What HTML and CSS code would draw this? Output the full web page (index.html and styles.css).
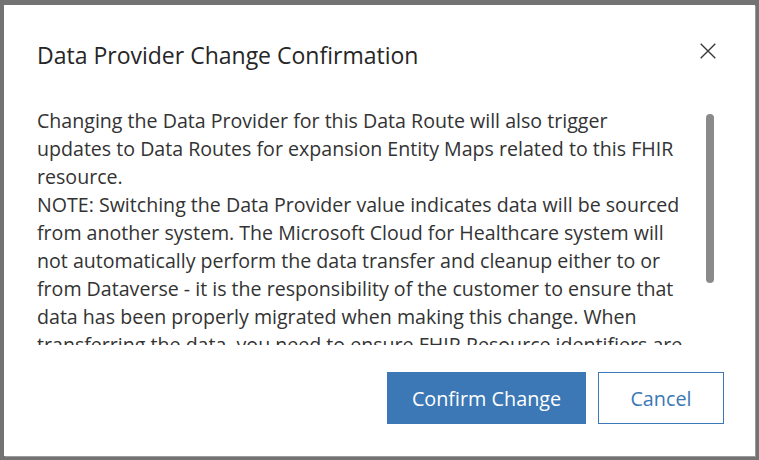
FILE: index.html
```html
<!DOCTYPE html>
<html lang="en">
<head>
  <meta charset="UTF-8">
  <meta name="viewport" content="width=device-width, initial-scale=1.0">
  <title>Data Provider Change Confirmation</title>
  <link rel="stylesheet" href="styles.css">
</head>
<body>
  <div class="dialog" role="dialog" aria-labelledby="dialog-title">
    <div class="dialog-header">
      <h1 id="dialog-title" class="dialog-title">Data Provider Change Confirmation</h1>
      <button class="close-button" aria-label="Close">
        <svg width="16" height="16" viewBox="0 0 16 16">
          <path d="M0.7 0.7 L15.3 15.3 M15.3 0.7 L0.7 15.3" stroke="#3a3a3a" stroke-width="1.4" fill="none"/>
        </svg>
      </button>
    </div>

    <div class="dialog-body-wrap">
      <div class="dialog-body">
        <p>Changing the Data Provider for this Data Route will also trigger<br>
        updates to Data Routes for expansion Entity Maps related to this FHIR<br>
        resource.</p>
        <p>NOTE: Switching the Data Provider value indicates data will be sourced<br>
        from another system. The Microsoft Cloud for Healthcare system will<br>
        not automatically perform the data transfer and cleanup either to or<br>
        from Dataverse - it is the responsibility of the customer to ensure that<br>
        data has been properly migrated when making this change. When<br>
        transferring the data, you need to ensure FHIR Resource identifiers are<br>
        maintained between the systems so that existing references continue to resolve correctly.</p>
      </div>
      <div class="scroll-thumb"></div>
    </div>

    <div class="dialog-footer">
      <button class="btn btn-primary">Confirm Change</button>
      <button class="btn btn-secondary">Cancel</button>
    </div>
  </div>
</body>
</html>
```

FILE: styles.css
```css
body {
  margin: 0;
  padding: 5px 0 0 4px;
  height: 460px;
  box-sizing: border-box;
  background-color: #737373;
  font-family: 'Open Sans', 'Noto Sans', sans-serif;
  color: #333;
  overflow: hidden;
}

.dialog {
  width: 751px;
  height: 451px;
  background-color: #fff;
  box-shadow: 1px 1px 0 #9a9a9a;
  display: flex;
  flex-direction: column;
}

.dialog-header {
  display: flex;
  justify-content: space-between;
  align-items: flex-start;
  padding: 30px 31px 0 33px;
}

.dialog-title {
  margin: 4px 0 0 0;
  font-size: 23px;
  line-height: 32px;
  font-weight: normal;
  color: #262626;
}

.close-button {
  width: 32px;
  height: 32px;
  padding: 0;
  border: none;
  background: none;
  display: flex;
  align-items: center;
  justify-content: center;
  cursor: pointer;
}

.dialog-body-wrap {
  position: relative;
  margin: 36px 0 0 33px;
  width: 679px;
  height: 238px;
}

.dialog-body {
  width: 667px;
  height: 100%;
  overflow: hidden;
  font-size: 19.6px;
  line-height: 28px;
  white-space: nowrap;
}

.dialog-body p {
  margin: 0;
}

/* custom scrollbar thumb */
.scroll-thumb {
  position: absolute;
  top: 7px;
  right: 2px;
  width: 8px;
  height: 169px;
  border-radius: 4px;
  background-color: #8a8a8a;
}

.dialog-footer {
  display: flex;
  justify-content: flex-end;
  gap: 12px;
  margin-top: 27px;
  padding-right: 31px;
}

.btn {
  height: 52px;
  font-family: inherit;
  font-size: 19.8px;
  border: 1px solid #3b78b5;
  cursor: pointer;
}

.btn-primary {
  width: 199px;
  background-color: #3b78b5;
  color: #fff;
}

.btn-secondary {
  width: 126px;
  background-color: #fff;
  color: #3b78b5;
}
```
